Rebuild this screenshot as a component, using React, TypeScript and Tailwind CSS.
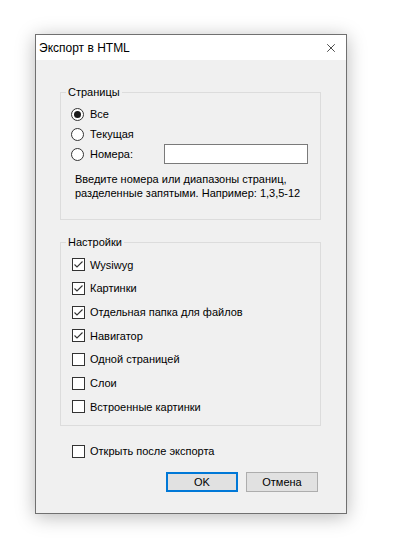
import { X } from "lucide-react";

const font = { fontFamily: '"Liberation Sans", Arial, sans-serif' };

function Radio({ checked, label }: { checked?: boolean; label: string }) {
  return (
    <div className="flex items-center">
      <span className="w-[13px] h-[13px] rounded-full border border-[#333] bg-white flex items-center justify-center">
        {checked && <span className="w-[7px] h-[7px] rounded-full bg-[#1a1a1a]" />}
      </span>
      <span className="ml-[6px]">{label}</span>
    </div>
  );
}

function Check({ checked, label }: { checked?: boolean; label: string }) {
  return (
    <div className="flex items-center h-[23.7px]">
      <span className="w-[13px] h-[13px] border border-[#333] bg-white flex items-center justify-center">
        {checked && (
          <svg width="11" height="11" viewBox="0 0 11 11">
            <polyline points="1.5,5.5 4,8 9.5,2.5" fill="none" stroke="#333" strokeWidth="1.1" />
          </svg>
        )}
      </span>
      <span className="ml-[5px]">{label}</span>
    </div>
  );
}

function Group({ title, className, children }: { title: string; className: string; children: React.ReactNode }) {
  return (
    <div className={`relative border border-[#dcdcdc] ml-[24px] w-[261px] ${className}`}>
      <span className="absolute -top-[8px] left-[5px] px-[2px] bg-[#f0f0f0] leading-[14px]">{title}</span>
      {children}
    </div>
  );
}

export default function App() {
  const settings = [
    { label: "Wysiwyg", checked: true },
    { label: "Картинки", checked: true },
    { label: "Отдельная папка для файлов", checked: true },
    { label: "Навигатор", checked: true },
    { label: "Одной страницей", checked: false },
    { label: "Слои", checked: false },
    { label: "Встроенные картинки", checked: false },
  ];

  return (
    <div className="w-[398px] h-[552px] bg-white pt-[34px] pl-[35px]" style={font}>
      <div className="w-[312px] h-[480px] border border-[#707070] flex flex-col shadow-[0_3px_18px_rgba(0,0,0,0.28)] text-[11px] text-black">
        {/* Title bar */}
        <div className="h-[25px] bg-white flex items-center justify-between pl-[3px] pr-[8px]">
          <span className="text-[12px]">Экспорт в HTML</span>
          <X size={14} strokeWidth={1.2} className="text-black" />
        </div>

        {/* Body */}
        <div className="flex-1 bg-[#f0f0f0] pt-[32px]">
          <Group title="Страницы" className="h-[128px] pt-[11px] pl-[10px]">
            <div className="h-[20px] flex items-center">
              <Radio checked label="Все" />
            </div>
            <div className="h-[20px] flex items-center">
              <Radio label="Текущая" />
            </div>
            <div className="h-[20px] flex items-center">
              <Radio label="Номера:" />
              <input className="ml-auto mr-[12px] w-[144px] h-[20px] border border-[#7a7a7a] bg-white outline-none" />
            </div>
            <p className="mt-[9px] ml-[4px] leading-[13.5px]">
              Введите номера или диапазоны страниц,
              <br />
              разделенные запятыми. Например: 1,3,5-12
            </p>
          </Group>

          <Group title="Настройки" className="mt-[22px] h-[184px] pt-[10px] pl-[11px]">
            {settings.map((s) => (
              <Check key={s.label} label={s.label} checked={s.checked} />
            ))}
          </Group>

          <div className="mt-[17px] pl-[36px]">
            <div className="flex items-center h-[16px]">
              <span className="w-[13px] h-[13px] border border-[#333] bg-white" />
              <span className="ml-[5px]">Открыть после экспорта</span>
            </div>
          </div>

          <div className="mt-[13px] flex justify-end gap-[8px] pr-[28px]">
            <button className="w-[72px] h-[20px] bg-[#e1e1e1] border-2 border-[#0078d7]">OK</button>
            <button className="w-[72px] h-[20px] bg-[#e1e1e1] border border-[#adadad]">Отмена</button>
          </div>
        </div>
      </div>
    </div>
  );
}
